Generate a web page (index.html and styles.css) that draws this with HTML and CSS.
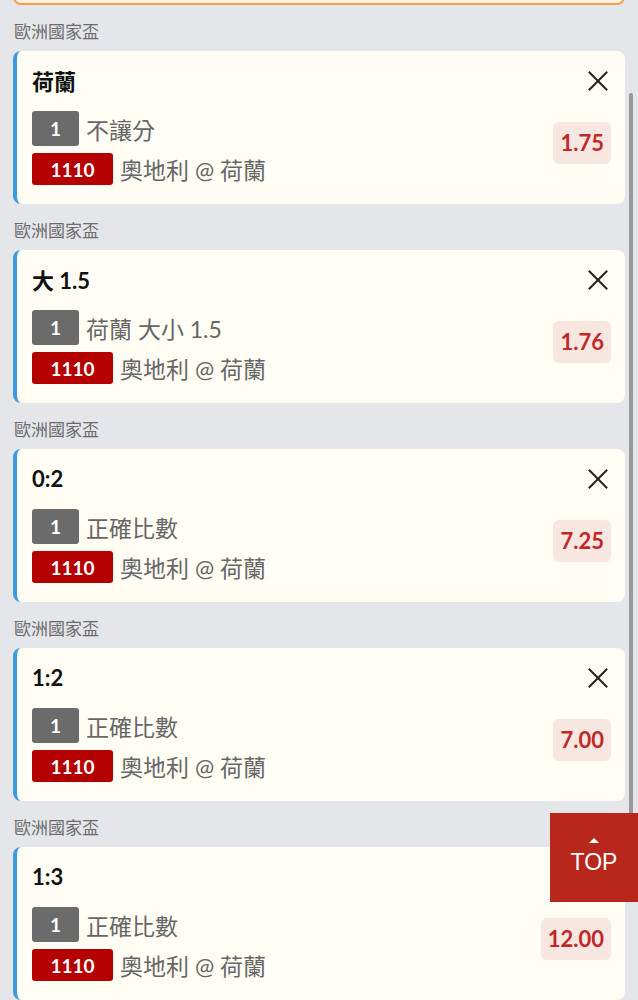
FILE: index.html
```html
<!DOCTYPE html>
<html lang="zh-Hant">
<head>
  <meta charset="UTF-8" />
  <meta name="viewport" content="width=device-width, initial-scale=1.0" />
  <title>投注單</title>
  <link rel="stylesheet" href="styles.css">
</head>
<body>

  <div class="page">
    <div class="top-box"></div>

    <div class="group">
      <div class="league">歐洲國家盃</div>
      <div class="card">
        <div class="card-head">
          <span class="pick">荷蘭</span>
          <span class="close"></span>
        </div>
        <div class="card-body">
          <div class="lines">
            <div class="line"><span class="badge grey">1</span><span class="desc">不讓分</span></div>
            <div class="line"><span class="badge red">1110</span><span class="desc">奧地利 @ 荷蘭</span></div>
          </div>
          <div class="odds">1.75</div>
        </div>
      </div>
    </div>

    <div class="group">
      <div class="league">歐洲國家盃</div>
      <div class="card">
        <div class="card-head">
          <span class="pick">大 1.5</span>
          <span class="close"></span>
        </div>
        <div class="card-body">
          <div class="lines">
            <div class="line"><span class="badge grey">1</span><span class="desc">荷蘭 大小 1.5</span></div>
            <div class="line"><span class="badge red">1110</span><span class="desc">奧地利 @ 荷蘭</span></div>
          </div>
          <div class="odds">1.76</div>
        </div>
      </div>
    </div>

    <div class="group">
      <div class="league">歐洲國家盃</div>
      <div class="card">
        <div class="card-head">
          <span class="pick">0:2</span>
          <span class="close"></span>
        </div>
        <div class="card-body">
          <div class="lines">
            <div class="line"><span class="badge grey">1</span><span class="desc">正確比數</span></div>
            <div class="line"><span class="badge red">1110</span><span class="desc">奧地利 @ 荷蘭</span></div>
          </div>
          <div class="odds">7.25</div>
        </div>
      </div>
    </div>

    <div class="group">
      <div class="league">歐洲國家盃</div>
      <div class="card">
        <div class="card-head">
          <span class="pick">1:2</span>
          <span class="close"></span>
        </div>
        <div class="card-body">
          <div class="lines">
            <div class="line"><span class="badge grey">1</span><span class="desc">正確比數</span></div>
            <div class="line"><span class="badge red">1110</span><span class="desc">奧地利 @ 荷蘭</span></div>
          </div>
          <div class="odds">7.00</div>
        </div>
      </div>
    </div>

    <div class="group">
      <div class="league">歐洲國家盃</div>
      <div class="card">
        <div class="card-head">
          <span class="pick">1:3</span>
          <span class="close"></span>
        </div>
        <div class="card-body">
          <div class="lines">
            <div class="line"><span class="badge grey">1</span><span class="desc">正確比數</span></div>
            <div class="line"><span class="badge red">1110</span><span class="desc">奧地利 @ 荷蘭</span></div>
          </div>
          <div class="odds">12.00</div>
        </div>
      </div>
    </div>
  </div>

  <div class="scroll-thumb"></div>

  <a class="to-top" href="#">
    <span class="arrow"></span>
    <span>TOP</span>
  </a>

</body>
</html>
```

FILE: styles.css
```css
html, body {
  margin: 0;
  padding: 0;
  font-family: 'Lato', 'Noto Sans CJK TC', sans-serif;
  background: #e4e6e9;
}

body {
  overflow: hidden;
  height: 1000px;
}

.page {
  padding: 0 13px;
}

.top-box {
  height: 30px;
  margin-top: -29px;
  border: 2px solid #f5a24c;
  border-radius: 8px;
  background: #fdf2e0;
}

.league {
  padding: 17px 0 9px 1px;
  font-size: 17px;
  line-height: 20px;
  color: #6c6c6c;
}

.card {
  height: 153px;
  box-sizing: border-box;
  background: #fffdf4;
  border-left: 4px solid #3b9be0;
  border-radius: 8px;
  padding: 14px 14px 0 15px;
}

.card-head {
  display: flex;
  justify-content: space-between;
  align-items: center;
  height: 30px;
}

.pick {
  font-size: 22px;
  font-weight: bold;
  color: #111;
}

.close {
  position: relative;
  width: 24px;
  height: 24px;
  margin-right: 1px;
  margin-top: 2px;
}

.close::before,
.close::after {
  content: '';
  position: absolute;
  left: -1px;
  top: 11px;
  width: 26px;
  height: 2px;
  background: #222;
  transform: rotate(45deg);
}

.close::after {
  transform: rotate(-45deg);
}

.card-body {
  display: flex;
  justify-content: space-between;
  align-items: flex-start;
  margin-top: 16px;
}

.line {
  display: flex;
  align-items: center;
  gap: 7px;
}

.line + .line {
  margin-top: 6px;
}

.badge {
  display: flex;
  align-items: center;
  justify-content: center;
  border-radius: 3px;
  color: #fff;
  font-size: 19px;
  font-weight: bold;
}

.badge.grey {
  width: 47px;
  height: 35px;
  background: #6b6b6b;
}

.badge.red {
  width: 81px;
  height: 32px;
  background: #b40000;
}

.desc {
  font-size: 23px;
  color: #666;
}

.odds {
  margin-top: 11px;
  padding: 0 7px;
  height: 42px;
  line-height: 42px;
  border-radius: 6px;
  background: #f7e7e0;
  color: #c0282a;
  font-size: 22px;
  font-weight: bold;
}

.scroll-thumb {
  position: fixed;
  left: 629px;
  top: 93px;
  width: 4px;
  height: 740px;
  border-radius: 2px;
  background: #999;
}

.to-top {
  position: fixed;
  left: 550px;
  top: 813px;
  width: 88px;
  height: 89px;
  display: flex;
  flex-direction: column;
  align-items: center;
  justify-content: center;
  gap: 6px;
  background: #b8261c;
  color: #fff;
  text-decoration: none;
  font-family: 'Liberation Sans', sans-serif;
  font-size: 23px;
}

.to-top .arrow {
  width: 0;
  height: 0;
  border-left: 5px solid transparent;
  border-right: 5px solid transparent;
  border-bottom: 5px solid #fff;
  margin-top: -2px;
}
```
